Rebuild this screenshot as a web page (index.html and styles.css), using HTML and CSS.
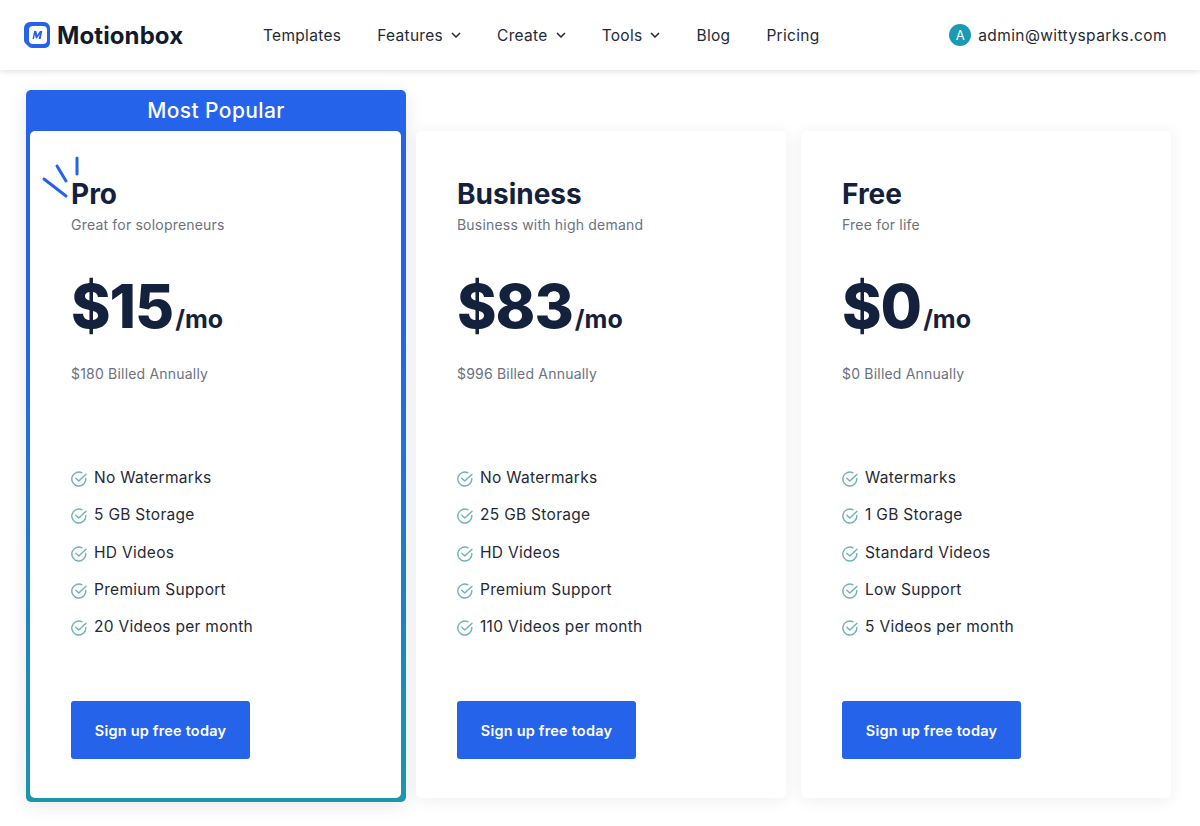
FILE: index.html
```html
<!DOCTYPE html>
<html lang="en">
<head>
<meta charset="utf-8">
<title>Motionbox Pricing</title>
<link rel="stylesheet" href="styles.css">
</head>
<body>
<header class="topbar">
  <a class="brand" href="#">
    <svg class="brand-mark" width="28" height="28" viewBox="0 0 28 28">
      <path d="M7 1h14a6 6 0 0 1 6 6v15a5 5 0 0 1-5 5H9a5 5 0 0 1-4-2l-3-3a4 4 0 0 1-1-3V7a6 6 0 0 1 6-6z" fill="#2563eb"/>
      <rect x="6" y="5" width="18" height="18" rx="4" fill="#fff"/>
      <path d="M9.5 18l1.6-8h2.2l1 4 2.6-4h2.4l-1.6 8h-2l.9-4.6-2.5 3.8h-1.3l-.9-3.8-.9 4.600z" fill="#2563eb"/>
    </svg>
    <span class="brand-name">Motionbox</span>
  </a>
  <nav class="nav">
    <a class="nav-link" href="#">Templates</a>
    <a class="nav-link" href="#">Features <svg class="chev" width="10" height="6" viewBox="0 0 10 6"><path d="M1 1l4 4 4-4" fill="none" stroke="#1f2937" stroke-width="1.5"/></svg></a>
    <a class="nav-link" href="#">Create <svg class="chev" width="10" height="6" viewBox="0 0 10 6"><path d="M1 1l4 4 4-4" fill="none" stroke="#1f2937" stroke-width="1.5"/></svg></a>
    <a class="nav-link" href="#">Tools <svg class="chev" width="10" height="6" viewBox="0 0 10 6"><path d="M1 1l4 4 4-4" fill="none" stroke="#1f2937" stroke-width="1.5"/></svg></a>
    <a class="nav-link" href="#">Blog</a>
    <a class="nav-link" href="#">Pricing</a>
  </nav>
  <div class="account">
    <span class="avatar">A</span>
    <span class="email">admin@wittysparks.com</span>
  </div>
</header>

<main class="plans">
  <section class="featured">
    <div class="featured-label">Most Popular</div>
    <div class="card card-inner">
      <svg class="sparks" width="40" height="44" viewBox="0 0 40 44">
        <path d="M36 2v16M16 10l9 15M3 23l22 17" fill="none" stroke="#2563eb" stroke-width="3" stroke-linecap="round"/>
      </svg>
      <h2 class="plan-name">Pro</h2>
      <p class="plan-sub">Great for solopreneurs</p>
      <div class="price"><span class="amount">$15</span><span class="per">/mo</span></div>
      <p class="billed">$180 Billed Annually</p>
      <ul class="features">
        <li class="feature"><svg class="tick" width="16" height="16" viewBox="0 0 16 16"><path d="M14.800 7.500A7 7 0 1 1 11 1.800" fill="none" stroke="#6fb3b3" stroke-width="1.400" stroke-linecap="round"/><path d="M4.800 7.200l3 2.800L15 3.300" fill="none" stroke="#6fb3b3" stroke-width="1.400" stroke-linecap="round" stroke-linejoin="round"/></svg>No Watermarks</li>
        <li class="feature"><svg class="tick" width="16" height="16" viewBox="0 0 16 16"><path d="M14.800 7.500A7 7 0 1 1 11 1.800" fill="none" stroke="#6fb3b3" stroke-width="1.400" stroke-linecap="round"/><path d="M4.800 7.200l3 2.800L15 3.300" fill="none" stroke="#6fb3b3" stroke-width="1.400" stroke-linecap="round" stroke-linejoin="round"/></svg>5 GB Storage</li>
        <li class="feature"><svg class="tick" width="16" height="16" viewBox="0 0 16 16"><path d="M14.800 7.500A7 7 0 1 1 11 1.800" fill="none" stroke="#6fb3b3" stroke-width="1.400" stroke-linecap="round"/><path d="M4.800 7.200l3 2.800L15 3.300" fill="none" stroke="#6fb3b3" stroke-width="1.400" stroke-linecap="round" stroke-linejoin="round"/></svg>HD Videos</li>
        <li class="feature"><svg class="tick" width="16" height="16" viewBox="0 0 16 16"><path d="M14.800 7.500A7 7 0 1 1 11 1.800" fill="none" stroke="#6fb3b3" stroke-width="1.400" stroke-linecap="round"/><path d="M4.800 7.200l3 2.800L15 3.300" fill="none" stroke="#6fb3b3" stroke-width="1.400" stroke-linecap="round" stroke-linejoin="round"/></svg>Premium Support</li>
        <li class="feature"><svg class="tick" width="16" height="16" viewBox="0 0 16 16"><path d="M14.800 7.500A7 7 0 1 1 11 1.800" fill="none" stroke="#6fb3b3" stroke-width="1.400" stroke-linecap="round"/><path d="M4.800 7.200l3 2.800L15 3.300" fill="none" stroke="#6fb3b3" stroke-width="1.400" stroke-linecap="round" stroke-linejoin="round"/></svg>20 Videos per month</li>
      </ul>
      <a class="cta" href="#">Sign up free today</a>
    </div>
  </section>

  <section class="card card-plain card-business">
    <h2 class="plan-name">Business</h2>
    <p class="plan-sub">Business with high demand</p>
    <div class="price"><span class="amount">$83</span><span class="per">/mo</span></div>
    <p class="billed">$996 Billed Annually</p>
    <ul class="features">
      <li class="feature"><svg class="tick" width="16" height="16" viewBox="0 0 16 16"><path d="M14.800 7.500A7 7 0 1 1 11 1.800" fill="none" stroke="#6fb3b3" stroke-width="1.400" stroke-linecap="round"/><path d="M4.800 7.200l3 2.800L15 3.300" fill="none" stroke="#6fb3b3" stroke-width="1.400" stroke-linecap="round" stroke-linejoin="round"/></svg>No Watermarks</li>
      <li class="feature"><svg class="tick" width="16" height="16" viewBox="0 0 16 16"><path d="M14.800 7.500A7 7 0 1 1 11 1.800" fill="none" stroke="#6fb3b3" stroke-width="1.400" stroke-linecap="round"/><path d="M4.800 7.200l3 2.800L15 3.300" fill="none" stroke="#6fb3b3" stroke-width="1.400" stroke-linecap="round" stroke-linejoin="round"/></svg>25 GB Storage</li>
      <li class="feature"><svg class="tick" width="16" height="16" viewBox="0 0 16 16"><path d="M14.800 7.500A7 7 0 1 1 11 1.800" fill="none" stroke="#6fb3b3" stroke-width="1.400" stroke-linecap="round"/><path d="M4.800 7.200l3 2.800L15 3.300" fill="none" stroke="#6fb3b3" stroke-width="1.400" stroke-linecap="round" stroke-linejoin="round"/></svg>HD Videos</li>
      <li class="feature"><svg class="tick" width="16" height="16" viewBox="0 0 16 16"><path d="M14.800 7.500A7 7 0 1 1 11 1.800" fill="none" stroke="#6fb3b3" stroke-width="1.400" stroke-linecap="round"/><path d="M4.800 7.200l3 2.800L15 3.300" fill="none" stroke="#6fb3b3" stroke-width="1.400" stroke-linecap="round" stroke-linejoin="round"/></svg>Premium Support</li>
      <li class="feature"><svg class="tick" width="16" height="16" viewBox="0 0 16 16"><path d="M14.800 7.500A7 7 0 1 1 11 1.800" fill="none" stroke="#6fb3b3" stroke-width="1.400" stroke-linecap="round"/><path d="M4.800 7.200l3 2.800L15 3.300" fill="none" stroke="#6fb3b3" stroke-width="1.400" stroke-linecap="round" stroke-linejoin="round"/></svg>110 Videos per month</li>
    </ul>
    <a class="cta" href="#">Sign up free today</a>
  </section>

  <section class="card card-plain card-free">
    <h2 class="plan-name">Free</h2>
    <p class="plan-sub">Free for life</p>
    <div class="price"><span class="amount">$0</span><span class="per">/mo</span></div>
    <p class="billed">$0 Billed Annually</p>
    <ul class="features">
      <li class="feature"><svg class="tick" width="16" height="16" viewBox="0 0 16 16"><path d="M14.800 7.500A7 7 0 1 1 11 1.800" fill="none" stroke="#6fb3b3" stroke-width="1.400" stroke-linecap="round"/><path d="M4.800 7.200l3 2.800L15 3.300" fill="none" stroke="#6fb3b3" stroke-width="1.400" stroke-linecap="round" stroke-linejoin="round"/></svg>Watermarks</li>
      <li class="feature"><svg class="tick" width="16" height="16" viewBox="0 0 16 16"><path d="M14.800 7.500A7 7 0 1 1 11 1.800" fill="none" stroke="#6fb3b3" stroke-width="1.400" stroke-linecap="round"/><path d="M4.800 7.200l3 2.800L15 3.300" fill="none" stroke="#6fb3b3" stroke-width="1.400" stroke-linecap="round" stroke-linejoin="round"/></svg>1 GB Storage</li>
      <li class="feature"><svg class="tick" width="16" height="16" viewBox="0 0 16 16"><path d="M14.800 7.500A7 7 0 1 1 11 1.800" fill="none" stroke="#6fb3b3" stroke-width="1.400" stroke-linecap="round"/><path d="M4.800 7.200l3 2.800L15 3.300" fill="none" stroke="#6fb3b3" stroke-width="1.400" stroke-linecap="round" stroke-linejoin="round"/></svg>Standard Videos</li>
      <li class="feature"><svg class="tick" width="16" height="16" viewBox="0 0 16 16"><path d="M14.800 7.500A7 7 0 1 1 11 1.800" fill="none" stroke="#6fb3b3" stroke-width="1.400" stroke-linecap="round"/><path d="M4.800 7.200l3 2.800L15 3.300" fill="none" stroke="#6fb3b3" stroke-width="1.400" stroke-linecap="round" stroke-linejoin="round"/></svg>Low Support</li>
      <li class="feature"><svg class="tick" width="16" height="16" viewBox="0 0 16 16"><path d="M14.800 7.500A7 7 0 1 1 11 1.800" fill="none" stroke="#6fb3b3" stroke-width="1.400" stroke-linecap="round"/><path d="M4.800 7.200l3 2.800L15 3.300" fill="none" stroke="#6fb3b3" stroke-width="1.400" stroke-linecap="round" stroke-linejoin="round"/></svg>5 Videos per month</li>
    </ul>
    <a class="cta" href="#">Sign up free today</a>
  </section>
</main>
</body>
</html>
```
FILE: styles.css
```css
* { box-sizing: border-box; }
html, body { margin: 0; padding: 0; }
body {
  background: #fff;
  color: #14213d;
  font-family: "Inter", "Liberation Sans", sans-serif;
  height: 826px;
  overflow: hidden;
}
a { color: inherit; text-decoration: none; }

.topbar {
  height: 70px;
  display: flex;
  align-items: center;
  padding: 0 33px 0 23px;
  background: #fff;
  box-shadow: 0 1px 6px rgba(30, 40, 60, 0.16);
}
.brand { display: flex; align-items: center; gap: 6px; width: 240px; }
.brand-mark { display: block; }
.brand-name { font-size: 24px; font-weight: 700; color: #111a2e; letter-spacing: 0.1px; }
.nav { display: flex; gap: 36px; align-items: center; }
.nav-link {
  font-size: 15.500px;
  color: #1f2937;
  letter-spacing: 0.3px;
  display: flex;
  align-items: center;
  gap: 8px;
}
.account { margin-left: auto; display: flex; align-items: center; gap: 7px; }
.avatar {
  width: 22px;
  height: 22px;
  border-radius: 50%;
  background: #1c9ab5;
  color: #fff;
  font-size: 13px;
  display: flex;
  align-items: center;
  justify-content: center;
}
.email { font-size: 15.500px; color: #1f2937; letter-spacing: 0.4px; }

.plans {
  display: flex;
  align-items: flex-end;
  padding: 20px 0 0 26px;
  height: 732px;
}
.featured {
  width: 380px;
  height: 712px;
  border-radius: 5px;
  padding: 0 4px 4px;
  display: flex;
  flex-direction: column;
  background: linear-gradient(180deg, #2563eb 0%, #2563eb 30%, #1a97a8 100%);
  box-shadow: 0 4px 18px rgba(30, 40, 60, 0.1);
}
.featured-label {
  height: 41px;
  display: flex;
  align-items: center;
  justify-content: center;
  color: #fff;
  font-size: 21px;
  font-weight: 500;
  letter-spacing: 0.4px;
}
.card {
  background: #fff;
  border-radius: 5px;
  padding: 47px 0 0 41px;
  position: relative;
}
.card-inner { flex: 1; margin-right: 1px; }
.card-plain {
  width: 370px;
  height: 667px;
  margin-bottom: 4px;
  box-shadow: 0 2px 16px rgba(30, 40, 60, 0.08);
}
.card-business { margin-left: 10px; }
.card-free { margin-left: 15px; }

.sparks { position: absolute; left: 11px; top: 25px; }
.plan-name {
  margin: 0;
  font-size: 28px;
  line-height: 32px;
  font-weight: 700;
  color: #14213d;
}
.plan-sub {
  margin: 5px 0 0;
  font-size: 14px;
  line-height: 20px;
  color: #6b7280;
  letter-spacing: 0.2px;
}
.price {
  margin-top: 35px;
  display: flex;
  align-items: baseline;
  height: 72px;
  line-height: 72px;
}
.amount { font-size: 60px; font-weight: 800; color: #14213d; letter-spacing: -1px; }
.per { font-size: 25px; font-weight: 700; color: #14213d; margin-left: 2px; }
.billed {
  margin: 22px 0 0;
  font-size: 14px;
  line-height: 20px;
  color: #6b7280;
  letter-spacing: 0.2px;
}
.features { list-style: none; margin: 75px 0 0; padding: 0; }
.feature {
  display: flex;
  align-items: center;
  gap: 7px;
  height: 37.300px;
  font-size: 15.500px;
  color: #1f2937;
  letter-spacing: 0.3px;
}
.tick { flex: none; margin-top: 3px; }
.cta {
  margin-top: 56px;
  width: 179px;
  height: 58px;
  display: flex;
  align-items: center;
  justify-content: center;
  background: #2563eb;
  border-radius: 3px;
  color: #fff;
  font-size: 14.500px;
  font-weight: 600;
  letter-spacing: 0.2px;
}
```
